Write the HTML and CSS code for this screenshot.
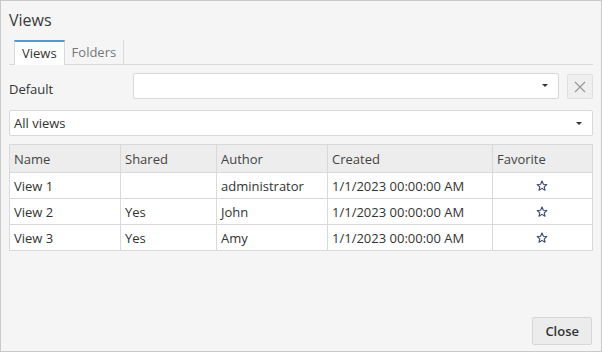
FILE: index.html
```html
<!DOCTYPE html>
<html lang="en">
<head>
    <meta charset="UTF-8">
    <title>Views</title>
    <link rel="stylesheet" href="styles.css">
</head>
<body>
    <div class="dialog">
        <div class="dialog-title">Views</div>
        <div class="dialog-body">
            <div class="tabs">
                <div class="tab active">Views</div>
                <div class="tab">Folders</div>
            </div>

            <div class="default-row">
                <label class="default-label">Default</label>
                <div class="select default-select">
                    <span></span>
                    <span class="caret"></span>
                </div>
                <button class="clear-btn" type="button">
                    <svg width="12" height="12" viewBox="0 0 12 12"><path d="M1 1L11 11M11 1L1 11" stroke="#9a9a9a" stroke-width="1.3" fill="none"/></svg>
                </button>
            </div>

            <div class="select filter-select">
                <span>All views</span>
                <span class="caret"></span>
            </div>

            <table class="views-table">
                <thead>
                    <tr>
                        <th class="col-name">Name</th>
                        <th class="col-shared">Shared</th>
                        <th class="col-author">Author</th>
                        <th class="col-created">Created</th>
                        <th class="col-fav">Favorite</th>
                    </tr>
                </thead>
                <tbody>
                    <tr>
                        <td>View 1</td>
                        <td></td>
                        <td>administrator</td>
                        <td>1/1/2023 00:00:00 AM</td>
                        <td class="fav"><svg class="star" width="12" height="12" viewBox="0 0 12 12"><path d="M6 1L7.4 4.2L10.8 4.5L8.2 6.8L9 10.2L6 8.4L3 10.2L3.8 6.8L1.2 4.5L4.6 4.2Z" fill="none" stroke="#3a4a6a" stroke-width="1.1" stroke-linejoin="round"/></svg></td>
                    </tr>
                    <tr>
                        <td>View 2</td>
                        <td>Yes</td>
                        <td>John</td>
                        <td>1/1/2023 00:00:00 AM</td>
                        <td class="fav"><svg class="star" width="12" height="12" viewBox="0 0 12 12"><path d="M6 1L7.4 4.2L10.8 4.5L8.2 6.8L9 10.2L6 8.4L3 10.2L3.8 6.8L1.2 4.5L4.6 4.2Z" fill="none" stroke="#3a4a6a" stroke-width="1.1" stroke-linejoin="round"/></svg></td>
                    </tr>
                    <tr>
                        <td>View 3</td>
                        <td>Yes</td>
                        <td>Amy</td>
                        <td>1/1/2023 00:00:00 AM</td>
                        <td class="fav"><svg class="star" width="12" height="12" viewBox="0 0 12 12"><path d="M6 1L7.4 4.2L10.8 4.5L8.2 6.8L9 10.2L6 8.4L3 10.2L3.8 6.8L1.2 4.5L4.6 4.2Z" fill="none" stroke="#3a4a6a" stroke-width="1.1" stroke-linejoin="round"/></svg></td>
                    </tr>
                </tbody>
            </table>
        </div>
        <div class="dialog-footer">
            <button class="close-btn" type="button">Close</button>
        </div>
    </div>
</body>
</html>
```

FILE: styles.css
```css
:root {
    --bg-color: #f5f5f5;
    --border-color: #d9d9d9;
    --text-color: #333;
    --accent-color: #5b96cf;
}
body {
    margin: 0;
    font-family: 'Open Sans', 'Liberation Sans', sans-serif;
    font-size: 13px;
    color: var(--text-color);
}
.dialog {
    width: 602px;
    height: 352px;
    box-sizing: border-box;
    border: 1px solid #c9c9c9;
    background-color: var(--bg-color);
    display: flex;
    flex-direction: column;
}
.dialog-title {
    font-size: 16px;
    line-height: 22px;
    padding: 8px 8px 9px;
    color: #3a3a3a;
}
.dialog-body {
    padding: 0 8px;
    flex: 1;
}
.tabs {
    display: flex;
    padding-left: 5px;
    border-bottom: 1px solid var(--border-color);
    height: 24px;
}
.tab {
    padding: 0 7px;
    line-height: 24px;
    color: #777;
    border-right: 1px solid var(--border-color);
    height: 24px;
    box-sizing: border-box;
}
.tab.active {
    background-color: white;
    color: #333;
    border-top: 2px solid var(--accent-color);
    border-left: 1px solid var(--border-color);
    line-height: 23px;
    height: 25px;
    margin-bottom: -1px;
}
.default-row {
    display: flex;
    align-items: center;
    margin-top: 7px;
}
.default-label {
    width: 124px;
    padding-top: 6px;
}
.select {
    display: flex;
    align-items: center;
    justify-content: space-between;
    height: 26px;
    box-sizing: border-box;
    padding: 0 10px 0 4px;
    background-color: white;
    border: 1px solid var(--border-color);
    border-radius: 2px;
}
.default-select {
    flex: 1;
}
.caret {
    width: 0;
    height: 0;
    border-left: 3px solid transparent;
    border-right: 3px solid transparent;
    border-top: 3px solid #333;
}
.clear-btn {
    width: 26px;
    height: 25px;
    margin-left: 8px;
    margin-top: 2px;
    padding: 0;
    display: flex;
    align-items: center;
    justify-content: center;
    background-color: #efefef;
    border: 1px solid #e0e0e0;
    border-radius: 2px;
}
.filter-select {
    margin-top: 11px;
}
.views-table {
    width: 100%;
    margin-top: 8px;
    border-collapse: collapse;
    background-color: white;
}
.views-table th,
.views-table td {
    border: 1px solid var(--border-color);
    text-align: left;
    font-weight: normal;
    padding: 0 4px;
    height: 25px;
    white-space: nowrap;
}
.views-table th {
    background-color: #ededed;
    height: 27px;
    color: #444;
}
.col-name { width: 102px; }
.col-shared { width: 87px; }
.col-author { width: 102px; }
.col-created { width: 156px; }
.views-table td.fav {
    text-align: center;
}
.star {
    display: block;
    margin: 0 auto;
    position: relative;
    left: -1px;
}
.dialog-footer {
    display: flex;
    justify-content: flex-end;
    padding: 0 9px 6px;
}
.close-btn {
    font-family: inherit;
    font-size: 13px;
    font-weight: 600;
    color: #333;
    height: 28px;
    padding: 0 12px;
    background-color: #ececec;
    border: 1px solid #d6d6d6;
    border-radius: 2px;
}
```
